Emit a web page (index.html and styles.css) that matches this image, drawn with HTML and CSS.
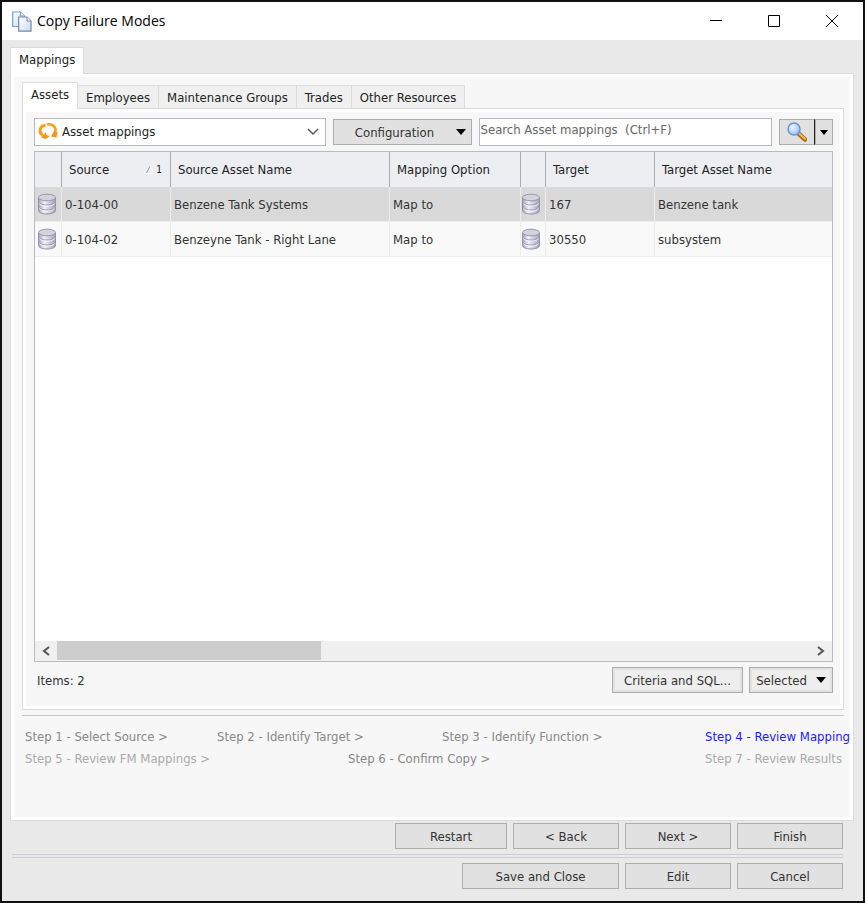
FILE: index.html
```
<!DOCTYPE html>
<html lang="en">
<head>
    <meta charset="UTF-8">
    <meta name="viewport" content="width=device-width, initial-scale=1.0">
    <title>Copy Failure Modes</title>
    <link rel="stylesheet" href="styles.css">
</head>
<body>
    <!-- Shared icons -->
    <svg class="symbols" width="0" height="0">
        <defs>
            <linearGradient id="metal" x1="0" x2="1" y1="0" y2="0">
                <stop offset="0" stop-color="#a3a2b6"/>
                <stop offset="0.35" stop-color="#f0f0f8"/>
                <stop offset="1" stop-color="#a09fb4"/>
            </linearGradient>
            <linearGradient id="paper" x1="0" x2="1" y1="0" y2="1">
                <stop offset="0" stop-color="#ffffff"/>
                <stop offset="1" stop-color="#c9dcf3"/>
            </linearGradient>
            <radialGradient id="lens" cx="0.4" cy="0.35" r="0.7">
                <stop offset="0" stop-color="#eef9ff"/>
                <stop offset="1" stop-color="#8fc0f8"/>
            </radialGradient>
        </defs>
        <symbol id="database" viewBox="0 0 20 22">
            <path d="M1.500 4.500v13c0 2 3.800 3.500 8.500 3.500s8.500-1.500 8.500-3.500v-13z" fill="url(#metal)" stroke="#9493a8"/>
            <ellipse cx="10" cy="4.500" rx="8.500" ry="3.300" fill="#d3d3de" stroke="#9a99ad"/>
            <path d="M2 9c1 2 4 3 8 3s7-1 8-3M2 14c1 2 4 3 8 3s7-1 8-3" fill="none" stroke="#a09fb4"/>
            <path d="M2.500 10.500c1 2 4 2.700 7.500 2.700s6.500-.7 7.500-2.700M2.500 15.500c1 2 4 2.700 7.500 2.700s6.500-.7 7.500-2.700" fill="none" stroke="#f4f4fb"/>
        </symbol>
    </svg>

    <div class="window">
        <header class="titlebar">
            <svg class="copy-icon" width="20" height="21" viewBox="0 0 20 21">
                <path d="M.7 1h7.800l4 4v10.500H.7z" fill="url(#paper)" stroke="#6f9fd8" stroke-width="1.200"/>
                <path d="M8.500 1v4h4" fill="#fff" stroke="#6f9fd8"/>
                <path d="M6.700 6h8.300l4 4v10.200H6.700z" fill="url(#paper)" stroke="#7689a8" stroke-width="1.200"/>
                <path d="M15 6v4h4" fill="#fff" stroke="#7689a8"/>
            </svg>
            <h1>Copy Failure Modes</h1>
            <div class="window-controls">
                <button type="button" aria-label="Minimize"><svg width="12" height="12" viewBox="0 0 12 12"><path d="M0 5.500h12"/></svg></button>
                <button type="button" aria-label="Maximize"><svg width="12" height="12" viewBox="0 0 12 12"><path d="M.5.5h11v11H.5z"/></svg></button>
                <button type="button" aria-label="Close"><svg width="12" height="12" viewBox="0 0 12 12"><path d="M0 0l12 12M12 0L0 12"/></svg></button>
            </div>
        </header>

        <main class="content">
            <div class="tabs">
                <button type="button" class="tab active">Mappings</button>
            </div>
            <section class="panel outer-panel">
                <div class="inner">
                    <div class="tabs sub-tabs">
                        <button type="button" class="tab active">Assets</button>
                        <button type="button" class="tab">Employees</button>
                        <button type="button" class="tab">Maintenance Groups</button>
                        <button type="button" class="tab">Trades</button>
                        <button type="button" class="tab">Other Resources</button>
                    </div>

                    <div class="panel assets-panel">
                        <div class="toolbar">
                            <div class="view-select">
                                <svg class="view-icon" width="20" height="18" viewBox="0 0 20 18">
                                    <path d="M7.500 3.200C1 4 .5 11 5 13.200" fill="none" stroke="#f9a01b" stroke-width="3"/>
                                    <path d="M9 2.600C15 1 19.500 6 16.500 11.500" fill="none" stroke="#f9a01b" stroke-width="2.600"/>
                                    <path d="M3 15.500l5-5.500v2.500l3.500 2-4 2.500z" fill="#f7941d"/>
                                    <path d="M13 14.500l3-5.500 3.500 1-1 5.500z" fill="#f7941d"/>
                                </svg>
                                <select aria-label="View">
                                    <option>Asset mappings</option>
                                </select>
                                <svg class="chevron" width="12" height="8" viewBox="0 0 12 8"><path d="M1 1l5 5 5-5" fill="none" stroke="#555" stroke-width="1.400"/></svg>
                            </div>
                            <button type="button" class="btn config">
                                <span>Configuration</span>
                                <svg width="10" height="6" viewBox="0 0 10 6"><path d="M0 0h10L5 6z"/></svg>
                            </button>
                            <input type="text" class="search" aria-label="Search" placeholder="Search Asset mappings&nbsp; (Ctrl+F)">
                            <div class="search-buttons">
                                <button type="button" class="btn find" aria-label="Search">
                                    <svg width="20" height="20" viewBox="0 0 20 20">
                                        <path d="M11.500 11.500l6.500 6" stroke="#a86e20" stroke-width="4.500" stroke-linecap="round"/>
                                        <path d="M12 11.500l6 5.300" stroke="#f0b95a" stroke-width="2" stroke-linecap="round"/>
                                        <circle cx="7" cy="7" r="6" fill="url(#lens)" stroke="#6f8fe0" stroke-width="1.500"/>
                                    </svg>
                                </button>
                                <button type="button" class="btn find-more" aria-label="Search options">
                                    <svg width="8" height="5" viewBox="0 0 8 5"><path d="M0 0h8L4 5z"/></svg>
                                </button>
                            </div>
                        </div>

                        <div class="grid">
                            <table>
                                <colgroup>
                                    <col class="col-icon"><col class="col-source"><col class="col-name"><col class="col-option"><col class="col-mark"><col class="col-source"><col>
                                </colgroup>
                                <thead>
                                    <tr>
                                        <th></th>
                                        <th>
                                            <div class="sorted">Source
                                                <span class="sort"><svg width="9" height="8" viewBox="0 0 9 8"><path d="M0 8l4-8" fill="none" stroke="#999"/><path d="M4 0l4 7.500H0" fill="none" stroke="#fff"/></svg>1</span>
                                            </div>
                                        </th>
                                        <th>Source Asset Name</th>
                                        <th>Mapping Option</th>
                                        <th></th>
                                        <th>Target</th>
                                        <th>Target Asset Name</th>
                                    </tr>
                                </thead>
                                <tbody>
                                    <tr class="selected">
                                        <td class="icon"><svg width="20" height="22"><use href="#database"/></svg></td>
                                        <td>0-104-00</td>
                                        <td>Benzene Tank Systems</td>
                                        <td>Map to</td>
                                        <td class="icon mark"><svg width="20" height="22"><use href="#database"/></svg></td>
                                        <td>167</td>
                                        <td>Benzene tank</td>
                                    </tr>
                                    <tr>
                                        <td class="icon"><svg width="20" height="22"><use href="#database"/></svg></td>
                                        <td>0-104-02</td>
                                        <td>Benzeyne Tank - Right Lane</td>
                                        <td>Map to</td>
                                        <td class="icon mark"><svg width="20" height="22"><use href="#database"/></svg></td>
                                        <td>30550</td>
                                        <td>subsystem</td>
                                    </tr>
                                </tbody>
                            </table>
                            <div class="scrollbar">
                                <button type="button" aria-label="Scroll left"><svg width="8" height="10" viewBox="0 0 8 10"><path d="M7 1L2 5l5 4"/></svg></button>
                                <div class="track"><div class="thumb"></div></div>
                                <button type="button" aria-label="Scroll right"><svg width="8" height="10" viewBox="0 0 8 10"><path d="M1 1l5 4-5 4"/></svg></button>
                            </div>
                        </div>

                        <div class="grid-footer">
                            <span class="items">Items: 2</span>
                            <button type="button" class="btn light criteria">Criteria and SQL...</button>
                            <button type="button" class="btn light picked">
                                Selected
                                <svg width="10" height="6" viewBox="0 0 10 6"><path d="M0 0h10L5 6z"/></svg>
                            </button>
                        </div>
                    </div>

                    <!-- Wizard steps -->
                    <div class="steps">
                        <div class="step-row four">
                            <span>Step 1 - Select Source &gt;</span>
                            <span>Step 2 - Identify Target &gt;</span>
                            <span>Step 3 - Identify Function &gt;</span>
                            <span class="current">Step 4 - Review Mapping</span>
                        </div>
                        <div class="step-row three">
                            <span class="pending">Step 5 - Review FM Mappings &gt;</span>
                            <span>Step 6 - Confirm Copy &gt;</span>
                            <span class="pending">Step 7 - Review Results</span>
                        </div>
                    </div>
                </div>
            </section>
        </main>

        <footer class="actions">
            <div class="action-row wizard">
                <button type="button" class="btn restart">Restart</button>
                <button type="button" class="btn">&lt; Back</button>
                <button type="button" class="btn">Next &gt;</button>
                <button type="button" class="btn">Finish</button>
            </div>
            <div class="action-row">
                <button type="button" class="btn save">Save and Close</button>
                <button type="button" class="btn">Edit</button>
                <button type="button" class="btn">Cancel</button>
            </div>
        </footer>
    </div>
</body>
</html>
```
FILE: styles.css
```
* {
    box-sizing: border-box;
}
body {
    margin: 0;
    font-family: "DejaVu Sans Condensed", "DejaVu Sans", sans-serif;
    font-size: 13px;
    color: #333;
}
button, input, select {
    font: inherit;
    color: inherit;
    margin: 0;
    border-radius: 0;
}
svg {
    display: block;
}
.symbols {
    position: absolute;
}
.window {
    display: flex;
    flex-direction: column;
    min-height: 100vh;
    background: #e9e9e9;
    border: 2px solid #111;
}

/* Title bar */
.titlebar {
    display: flex;
    align-items: center;
    height: 38px;
    padding-left: 10px;
    background: #fff;
}
h1 {
    flex: 1;
    margin: 0 0 0 5px;
    padding-bottom: 2px;
    font-family: "Open Sans", sans-serif;
    font-size: 14px;
    font-weight: normal;
    color: #000;
}
.window-controls {
    display: flex;
    padding-right: 2px;
}
.window-controls button {
    display: flex;
    align-items: center;
    justify-content: center;
    width: 58px;
    height: 38px;
    padding: 0;
    border: none;
    background: none;
}
.window-controls path {
    fill: none;
    stroke: #000;
}

/* Tabs and panels */
.content {
    flex: 1;
    display: flex;
    flex-direction: column;
    padding: 7px 9px 0 8px;
}
.tabs {
    display: flex;
    align-items: flex-end;
}
.tab {
    height: 23px;
    padding: 0 8px;
    border: 1px solid #dcdcdc;
    border-left: none;
    border-bottom: none;
    background: #f0f0f0;
    color: #222;
}
.tab.active {
    height: 27px;
    padding-bottom: 3px;
    border-left: 1px solid #dcdcdc;
    background: #fff;
    margin-bottom: -1px;
    z-index: 1;
}
.panel {
    display: flex;
    flex-direction: column;
    flex: 1;
    border: 1px solid #dcdcdc;
    background: #f7f7f7;
    box-shadow: inset 0 0 0 3px #fff;
}
.inner {
    display: flex;
    flex-direction: column;
    flex: 1;
    padding: 8px 0 0 11px;
}
.assets-panel {
    margin-right: 9px;
    padding: 9px 10px 16px 11px;
}

/* Buttons */
.btn {
    display: flex;
    align-items: center;
    justify-content: center;
    height: 26px;
    padding: 0 6px;
    border: 1px solid #adadad;
    background: #e1e1e1;
}
.btn.light {
    background: #eee;
    box-shadow: inset 0 0 0 2px #e2e2e2;
}

/* Toolbar */
.toolbar {
    display: flex;
    align-items: center;
    gap: 7px;
    margin-bottom: 5px;
}
.view-select {
    display: grid;
    grid-template-columns: 28px 1fr 22px;
    align-items: center;
    flex: 1;
    height: 28px;
    border: 1px solid #b9b9c2;
    background: #fff;
}
.view-select select {
    grid-area: 1 / 1 / 2 / 4;
    width: 100%;
    height: 26px;
    padding: 0 0 2px 27px;
    border: none;
    background: transparent;
    appearance: none;
    color: #222;
}
.view-icon {
    grid-area: 1 / 1;
    margin: 0 0 2px 3px;
}
.chevron {
    grid-area: 1 / 3;
    margin-left: 4px;
}
.config {
    width: 139px;
    padding: 0 5px 0 0;
}
.config span {
    flex: 1;
}
.search {
    flex: 1;
    min-width: 0;
    height: 28px;
    padding: 0 1px 6px;
    border: 1px solid #b9b9c2;
    background: #fff;
}
.search::placeholder {
    color: #666;
}
.search-buttons {
    display: flex;
}
.find {
    width: 36px;
    border-right-color: #222;
}
.find-more {
    width: 18px;
    padding: 0;
}

/* Data grid */
.grid {
    display: flex;
    flex-direction: column;
    justify-content: space-between;
    flex: 1;
    border: 1px solid #b9bbc0;
    background: #fff;
}
table {
    width: 100%;
    table-layout: fixed;
    border-collapse: separate;
    border-spacing: 0;
}
.col-icon {
    width: 27px;
}
.col-mark {
    width: 25px;
}
.col-source {
    width: 109px;
}
.col-name {
    width: 219px;
}
.col-option {
    width: 131px;
}
th {
    height: 35px;
    padding: 0 0 0 7px;
    border-right: 1px solid #acacac;
    background: #eceef2;
    color: #222;
    font-weight: normal;
    text-align: left;
}
td {
    height: 35px;
    padding: 0 0 0 3px;
    border-right: 1px solid #ececec;
    border-bottom: 1px solid #ececec;
    background: #f9f9f9;
}
th:last-child, td:last-child {
    border-right: none;
}
.selected td {
    background: #d9d9d9;
}
td.icon {
    padding: 0 0 0 2px;
}
td.mark {
    padding: 0;
}
.sorted {
    display: flex;
    align-items: center;
    justify-content: space-between;
    padding-right: 8px;
}
.sort {
    display: flex;
    align-items: center;
    gap: 1px;
    font-size: 10px;
}
.scrollbar {
    display: flex;
    height: 20px;
    background: #f0f0f0;
}
.scrollbar button {
    display: flex;
    align-items: center;
    justify-content: center;
    width: 22px;
    padding: 0;
    border: none;
    background: none;
}
.scrollbar path {
    fill: none;
    stroke: #555;
    stroke-width: 2;
}
.track {
    flex: 1;
}
.thumb {
    width: 35%;
    height: 19px;
    background: #cdcdcd;
}
.grid-footer {
    display: flex;
    align-items: center;
    gap: 6px;
    margin-top: 5px;
}
.items {
    flex: 1;
    padding-left: 3px;
}
.criteria {
    width: 131px;
}
.picked {
    gap: 9px;
    width: 84px;
}

/* Steps */
.steps {
    margin-top: 5px;
    padding-bottom: 50px;
}
.steps::before {
    content: "";
    display: block;
    height: 1px;
    margin: 0 9px 10px 0;
    background: #c4c8cd;
}
.step-row {
    display: grid;
    height: 22px;
    padding-left: 3px;
    line-height: 22px;
    color: #888;
    white-space: nowrap;
}
.step-row span {
    min-width: 0;
}
.four {
    grid-template-columns: 192fr 225fr 263fr 148fr;
}
.three {
    grid-template-columns: 323fr 357fr 148fr;
}
.pending {
    color: #aaa;
}
.current {
    color: #1a1aff;
}

/* Bottom buttons */
.actions {
    padding: 2px 20px 12px 10px;
}
.action-row {
    display: flex;
    justify-content: flex-end;
    gap: 6px;
}
.action-row .btn {
    width: 106px;
}
.action-row .restart {
    width: 112px;
}
.action-row .save {
    width: 157px;
}
.wizard {
    padding-bottom: 5px;
    margin-bottom: 5px;
    border-bottom: 4px double #ccced4;
}
```
